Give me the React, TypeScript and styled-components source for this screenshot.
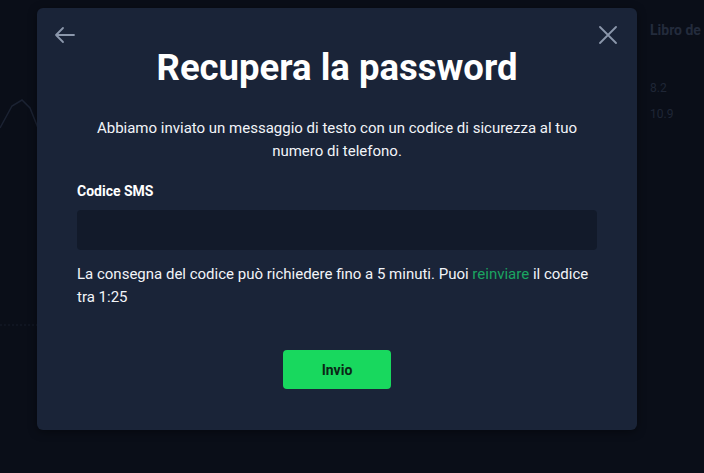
import React from 'react';
import styled, { createGlobalStyle } from 'styled-components';

const GlobalStyle = createGlobalStyle`
  html, body {
    margin: 0;
    padding: 0;
    background: #0a0e18;
    font-family: Roboto, "Liberation Sans", sans-serif;
  }
`;

const Page = styled.div`
  position: relative;
  width: 704px;
  height: 473px;
  overflow: hidden;
  background: #0a0e18;
  display: grid;
  grid-template-columns: 1fr 64px;
`;

const ChartArea = styled.div`
  position: relative;
`;

const OrderBook = styled.div`
  padding: 22px 0 0 10px;
  display: flex;
  flex-direction: column;
  gap: 6px;
  overflow: hidden;
  color: #1f2636;
  font-size: 13px;
`;

const BookTitle = styled.div`
  font-weight: 700;
  font-size: 14px;
  margin-bottom: 34px;
  white-space: nowrap;
  color: #232b3c;
`;

const BookRow = styled.div`
  font-size: 12px;
  height: 20px;
  line-height: 20px;
`;

const Modal = styled.div`
  position: absolute;
  left: 37px;
  top: 8px;
  width: 600px;
  height: 422px;
  box-sizing: border-box;
  background: #1a2438;
  border-radius: 6px;
  padding: 40px 40px 41px;
  display: flex;
  flex-direction: column;
  align-items: center;
  box-shadow: 0 2px 10px rgba(0, 0, 0, 0.4);
`;

const IconButton = styled.button<{ side: 'left' | 'right' }>`
  position: absolute;
  top: 13px;
  ${({ side }) => (side === 'left' ? 'left: 14px;' : 'right: 15px;')}
  width: 28px;
  height: 28px;
  border: none;
  background: none;
  padding: 0;
  display: flex;
  align-items: center;
  justify-content: center;
  color: #8b97ab;
  cursor: pointer;
`;

const Title = styled.h1`
  margin: 0;
  font-size: 36.5px;
  line-height: 40px;
  font-weight: 700;
  color: #ffffff;
`;

const Description = styled.p`
  margin: 29px 0 0;
  max-width: 490px;
  text-align: center;
  font-size: 15px;
  line-height: 23px;
  color: #f2f4f8;
`;

const Field = styled.div`
  align-self: stretch;
  margin-top: 20px;
  display: flex;
  flex-direction: column;
  gap: 11px;
`;

const Label = styled.label`
  font-size: 14px;
  font-weight: 700;
  color: #ffffff;
`;

const Input = styled.input`
  height: 40px;
  box-sizing: border-box;
  border: none;
  border-radius: 4px;
  background: #121a2a;
  color: #fff;
  padding: 0 12px;
  font-size: 15px;
  outline: none;
`;

const Helper = styled.p`
  align-self: stretch;
  margin: 13px 0 0;
  font-size: 15px;
  line-height: 23px;
  color: #f2f4f8;
`;

const ResendLink = styled.a`
  color: #1aa561;
  text-decoration: none;
  cursor: pointer;
`;

const SubmitButton = styled.button`
  margin-top: auto;
  width: 108px;
  height: 39px;
  border: none;
  border-radius: 4px;
  background: #18d85e;
  color: #0b2616;
  font-family: Roboto, "Liberation Sans", sans-serif;
  font-size: 14px;
  font-weight: 700;
  cursor: pointer;
`;

const ArrowLeft = () => (
  <svg width="22" height="22" viewBox="0 0 22 22" fill="none" stroke="currentColor" strokeWidth="1.8" strokeLinecap="round" strokeLinejoin="round">
    <path d="M20 11H2M9 4l-7 7 7 7" />
  </svg>
);

const CloseIcon = () => (
  <svg width="18" height="18" viewBox="0 0 18 18" fill="none" stroke="currentColor" strokeWidth="1.8" strokeLinecap="round">
    <path d="M1 1l16 16M17 1L1 17" />
  </svg>
);

export default function App() {
  const [code, setCode] = React.useState('');

  return (
    <>
      <GlobalStyle />
      <Page>
        <ChartArea>
          <svg width="640" height="473" style={{ position: 'absolute', left: 0, top: 0 }}>
            <polyline points="0,128 12,106 22,100 30,108 38,128" fill="none" stroke="#1b2232" strokeWidth="1.5" />
            <line x1="0" y1="325" x2="37" y2="325" stroke="#161c2a" strokeDasharray="2 2" />
          </svg>
        </ChartArea>
        <OrderBook>
          <BookTitle>Libro de</BookTitle>
          <BookRow>8.2</BookRow>
          <BookRow>10.9</BookRow>
        </OrderBook>
        <Modal>
          <IconButton side="left" aria-label="Indietro">
            <ArrowLeft />
          </IconButton>
          <IconButton side="right" aria-label="Chiudi">
            <CloseIcon />
          </IconButton>
          <Title>Recupera la password</Title>
          <Description>
            Abbiamo inviato un messaggio di testo con un codice di sicurezza al tuo numero di telefono.
          </Description>
          <Field>
            <Label htmlFor="sms">Codice SMS</Label>
            <Input id="sms" value={code} onChange={e => setCode(e.target.value)} />
          </Field>
          <Helper>
            La consegna del codice può richiedere fino a 5 minuti. Puoi <ResendLink>reinviare</ResendLink> il codice tra 1:25
          </Helper>
          <SubmitButton>Invio</SubmitButton>
        </Modal>
      </Page>
    </>
  );
}
